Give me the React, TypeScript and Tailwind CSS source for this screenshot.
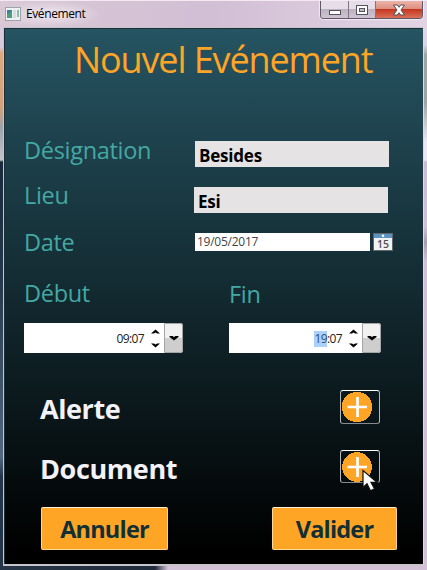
import type { ReactNode } from "react";

const label = "text-[#44a8a3] whitespace-nowrap text-[23.5px] leading-8 tracking-[-0.300px]";
const field =
  "h-[26px] w-[194px] bg-[#e5e3e3] pl-1 pt-[2px] text-[17px] font-bold leading-[26px] tracking-[-0.200px] text-black";
const heading = "w-[300px] text-[27px] font-bold leading-[38px] tracking-[-0.400px] text-[#f2f2f8]";

function AppIcon() {
  return (
    <svg width="16" height="14" viewBox="0 0 16 14" className="shrink-0">
      <rect x=".5" y=".5" width="15" height="13" fill="#eef1f2" stroke="#9ba3ac" />
      <rect x="2" y="3" width="5" height="8" fill="#3d8099" />
      <path d="M2 11V7l5-3v7z" fill="#4f9c78" />
      <rect x="8" y="3" width="3" height="8" fill="#d7dcdd" />
      <rect x="12" y="3" width="2" height="7" fill="#8dbca8" />
    </svg>
  );
}

function WindowControls() {
  return (
    <div className="ml-auto mr-[4px] flex h-[18px] w-[103px] overflow-hidden rounded-b-[4px] border border-t-0 border-[#5f5766] shadow-[0_0_1px_1px_#f4eaf5]">
      <div className="flex w-[28px] items-center justify-center border-r border-[#7d7484] bg-linear-to-b from-[#e6dde8] from-45% via-[#bdb2c0] via-50% to-[#cfc4d3] pt-[5px]">
        <svg width="12" height="5"><rect x=".5" y=".5" width="11" height="4" fill="#fff" stroke="#555260" /></svg>
      </div>
      <div className="flex w-[27px] items-center justify-center border-r border-[#7d7484] bg-linear-to-b from-[#e6dde8] from-45% via-[#bdb2c0] via-50% to-[#cfc4d3]">
        <svg width="12" height="10">
          <rect x=".5" y=".5" width="11" height="9" fill="#fff" stroke="#555260" />
          <rect x="3.5" y="3.5" width="5" height="3" fill="#c5bbca" stroke="#555260" />
        </svg>
      </div>
      <div className="flex flex-1 items-center justify-center bg-[linear-gradient(#ecb5aa,#dd8f7f_45%,#c43820_50%,#db7059)]">
        <svg width="14" height="12" viewBox="0 0 14 12">
          <path d="M1.500 1h3.800L7 3.300 8.700 1h3.800L9 6l3.500 5H8.700L7 8.700 5.300 11H1.500L5 6z" fill="#fff" stroke="#54505d" strokeWidth="1" />
        </svg>
      </div>
    </div>
  );
}

function CalendarIcon() {
  return (
    <svg width="20" height="18" viewBox="0 0 20 18" className="ml-[3px] shrink-0">
      <rect x=".5" y=".5" width="19" height="17" fill="#f2f2f2" stroke="#60686d" />
      <rect x="1" y="1" width="18" height="4" fill="#5b93c4" />
      <circle cx="10" cy="2.800" r="1.300" fill="#fff" />
      <text x="10" y="15" textAnchor="middle" fontFamily="Open Sans, sans-serif" fontSize="10.500" fontWeight="600" fill="#515151">15</text>
    </svg>
  );
}

function TimeBox({ width, children }: { width: string; children: ReactNode }) {
  return (
    <div className={`flex h-[30px] ${width} rounded-r-[3px] bg-white text-[12px] leading-[32px] text-[#222]`}>
      <div className="flex flex-1 items-center justify-end pt-px tracking-[-0.600px]">
        {children}
      </div>
      <svg width="20" height="30" viewBox="0 0 20 30" className="shrink-0">
        <path d="M11.500 6.500l4.500 4h-3l-1.500-1-1.500 1H7zM11.500 24.500l4.500-4h-3l-1.500 1-1.500-1H7z" fill="#000" />
      </svg>
      <div className="flex w-[19px] items-center justify-center rounded-r-[3px] border border-[#a4a4a4] bg-linear-to-b from-[#f1f1f1] from-50% to-[#cecece] to-50%">
        <svg width="10" height="6"><path d="M.500 1h3L5 2l1.500-1h3v1L5 5.500.500 2z" fill="#000" /></svg>
      </div>
    </div>
  );
}

function PlusButton({ height, radius, children }: { height: string; radius: number; children?: ReactNode }) {
  return (
    <div className={`relative w-10 ${height} rounded-[3px] border border-b-[#858b8e] border-x-[#b5b9bb] border-t-white`}>
      <svg width="32" height="32" viewBox="0 0 32 32" className="block">
        <circle cx="16" cy="16" r={radius} fill="#ffa526" shapeRendering="crispEdges" />
        <path d="M6.500 16h19.500M16.500 6v20" stroke="#fff" strokeWidth="2.700" />
      </svg>
      {children}
    </div>
  );
}

const action =
  "flex h-[43px] items-center justify-center whitespace-nowrap rounded-[2px] border border-[#ffd692] border-t-[#fff0d5] bg-[#ffa526] pt-[2px] text-[23.5px] font-bold leading-none tracking-[-0.800px] text-[#122f35]";

export default function App() {
  return (
    <div className="flex h-[570px] w-[427px] flex-col overflow-hidden bg-[#d3c1d7] font-['Open_Sans',sans-serif]">
      <header className="flex h-[27px] shrink-0 items-start border-t border-[#f4e9f3] bg-linear-to-r from-[#d9c9d5] via-[#d2bed5] via-50% to-[#e2d4e5]">
        <div className="flex h-[26px] items-center bg-[radial-gradient(closest-side,#eee6ef,transparent)] pl-[5px] pr-4">
          <AppIcon />
          <span className="ml-[5px] text-[12px] tracking-[-0.400px] text-black">Evénement</span>
        </div>
        <WindowControls />
      </header>
      <div className="flex h-[539px] shrink-0">
        <div className="w-[3px] bg-[linear-gradient(#d8cadd_0,#d8cadd_20px,#dca97f_26px,#d5a17b_80px,#9ea2aa_100px,#c2c5ca_133px,#182a3c_135px,#24374c_250px,#536781_430px,#22354a_450px,#253548_539px)]" />
        <main className="flex w-[421px] flex-col border border-b-2 border-[#c7c4cb] border-r-[#e3d8e5] bg-[linear-gradient(#265462,#000_98%)] shadow-[inset_1px_1px_0_#1b3038]">
          <h1 className="mt-[7px] pl-[70px] text-[36px] leading-[50px] tracking-[-1.120px] whitespace-nowrap text-[#ffa526]">Nouvel Evénement</h1>
          <div className="mt-[49px] flex h-8 items-center pl-5">
            <div className={`${label} w-[171px]`}>Désignation</div>
            <div className={`${field} mt-[8px]`}>Besides</div>
          </div>
          <div className="mt-[13px] flex h-8 items-center pl-5">
            <div className={`${label} w-[170px]`}>Lieu</div>
            <div className={`${field} mt-[10px]`}>Esi</div>
          </div>
          <div className="mt-[15px] flex h-8 items-center pl-5">
            <div className={`${label} w-[171px]`}>Date</div>
            <div className="h-[18px] w-[175px] bg-white pl-[2px] text-[12px] leading-[18px] tracking-[-0.250px] text-[#444]">19/05/2017</div>
            <CalendarIcon />
          </div>
          <div className="mt-[19px] flex h-8 pl-5">
            <div className={`${label} w-[205px]`}>Début</div>
            <div className={`${label} pt-px`}>Fin</div>
          </div>
          <div className="mt-[14px] flex gap-[46px] pl-5">
            <TimeBox width="w-[159px]"><span>09:07</span></TimeBox>
            <TimeBox width="w-[152px]">
              <span className="bg-[#a9d1fb] leading-4 text-[#314f70]">19</span><span>:07</span>
            </TimeBox>
          </div>
          <div className="mt-[37px] flex pl-9">
            <div className={heading}>Alerte</div>
            <PlusButton height="h-[34px]" radius={15.2} />
          </div>
          <div className="mt-[22px] flex pl-9">
            <div className={heading}>Document</div>
            <PlusButton height="h-[33px]" radius={14.8}>
              <svg width="19" height="24" viewBox="0 0 19 24" className="absolute left-[20px] top-[18px]">
                <path d="M2 1.500v17l4-3.700 3.500 7 4-2-3.500-6.500h6z" fill="#fff" stroke="#101010" strokeWidth="1.200" />
              </svg>
            </PlusButton>
          </div>
          <div className="mt-[19px] flex gap-[104px] pl-[37px]">
            <div className={`${action} w-[127px]`}>Annuler</div>
            <div className={`${action} w-[125px]`}>Valider</div>
          </div>
        </main>
        <div className="w-[3px] bg-[linear-gradient(#e3d5e6_0,#dfd3e1_18px,#9fa4a7_28px,#9fa4a7_75px,#eee7ef_115px,#eee7ef_133px,#d0bbd5_135px,#d3bfd8_200px,#aa9cad_215px,#d3bfd8_235px,#d3c1d8_100%)]" />
      </div>
      <div className="h-1 bg-[linear-gradient(90deg,#273548_0,#202b3b_155px,#d3c1d7_168px)]" />
    </div>
  );
}
